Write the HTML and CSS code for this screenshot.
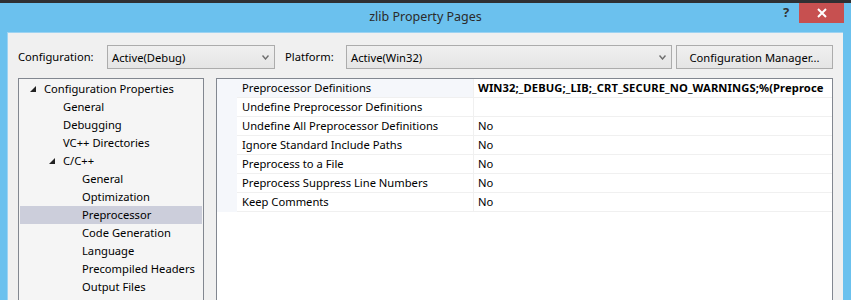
FILE: index.html
```html
<!DOCTYPE html>
<html lang="en">
<head>
    <meta charset="UTF-8">
    <title>zlib Property Pages</title>
    <link rel="stylesheet" href="styles.css">
</head>
<body>
    <div class="frame-top"></div>
    <div class="titlebar">
        <div></div>
        <div class="title">zlib Property Pages</div>
        <div class="caption-buttons">
            <div class="help-button">?</div>
            <div class="close-button">
                <svg width="10" height="10" viewBox="0 0 10 10"><path d="M1 1 L9 9 M9 1 L1 9" stroke="#fff" stroke-width="2"/></svg>
            </div>
        </div>
    </div>

    <div class="dialog">
        <div class="toolbar">
            <label class="toolbar-label config-label">Configuration:</label>
            <div class="combo config-combo">
                <span>Active(Debug)</span>
                <svg class="chevron" width="7" height="5" viewBox="0 0 7 5"><path d="M0.5 0.5 L3.5 4 L6.5 0.5" fill="none" stroke="#6d6d6d" stroke-width="1.4"/></svg>
            </div>
            <label class="toolbar-label platform-label">Platform:</label>
            <div class="combo platform-combo">
                <span>Active(Win32)</span>
                <svg class="chevron" width="7" height="5" viewBox="0 0 7 5"><path d="M0.5 0.5 L3.5 4 L6.5 0.5" fill="none" stroke="#6d6d6d" stroke-width="1.4"/></svg>
            </div>
            <button class="manager-button">Configuration Manager...</button>
        </div>

        <div class="panels">
            <div class="tree">
                <div class="tree-item level-0">
                    <svg class="expander" width="6" height="6" viewBox="0 0 6 6"><polygon points="6,0 6,6 0,6" fill="#222"/></svg>
                    Configuration Properties
                </div>
                <div class="tree-item level-1">General</div>
                <div class="tree-item level-1">Debugging</div>
                <div class="tree-item level-1">VC++ Directories</div>
                <div class="tree-item level-1">
                    <svg class="expander" width="6" height="6" viewBox="0 0 6 6"><polygon points="6,0 6,6 0,6" fill="#222"/></svg>
                    C/C++
                </div>
                <div class="tree-item level-2">General</div>
                <div class="tree-item level-2">Optimization</div>
                <div class="tree-item level-2 selected">Preprocessor</div>
                <div class="tree-item level-2">Code Generation</div>
                <div class="tree-item level-2">Language</div>
                <div class="tree-item level-2">Precompiled Headers</div>
                <div class="tree-item level-2">Output Files</div>
            </div>

            <div class="grid">
                <div class="grid-row focused">
                    <div class="grid-margin"></div>
                    <div class="grid-name">Preprocessor Definitions</div>
                    <div class="grid-value bold">WIN32;_DEBUG;_LIB;_CRT_SECURE_NO_WARNINGS;%(Preproce</div>
                </div>
                <div class="grid-row">
                    <div class="grid-margin"></div>
                    <div class="grid-name">Undefine Preprocessor Definitions</div>
                    <div class="grid-value"></div>
                </div>
                <div class="grid-row">
                    <div class="grid-margin"></div>
                    <div class="grid-name">Undefine All Preprocessor Definitions</div>
                    <div class="grid-value">No</div>
                </div>
                <div class="grid-row">
                    <div class="grid-margin"></div>
                    <div class="grid-name">Ignore Standard Include Paths</div>
                    <div class="grid-value">No</div>
                </div>
                <div class="grid-row">
                    <div class="grid-margin"></div>
                    <div class="grid-name">Preprocess to a File</div>
                    <div class="grid-value">No</div>
                </div>
                <div class="grid-row">
                    <div class="grid-margin"></div>
                    <div class="grid-name">Preprocess Suppress Line Numbers</div>
                    <div class="grid-value">No</div>
                </div>
                <div class="grid-row">
                    <div class="grid-margin"></div>
                    <div class="grid-name">Keep Comments</div>
                    <div class="grid-value">No</div>
                </div>
            </div>
        </div>
    </div>
</body>
</html>
```

FILE: styles.css
```css
* {
    margin: 0;
    padding: 0;
    box-sizing: border-box;
}

body {
    font-family: 'Segoe UI', 'Noto Sans', sans-serif;
    font-size: 11.2px;
    color: #000;
    background: #6bc1ee;
    width: 851px;
    height: 300px;
    overflow: hidden;
}

.frame-top {
    height: 3px;
    background: #2f3033;
}

/* Title bar */
.titlebar {
    display: grid;
    grid-template-columns: 1fr auto 1fr;
    height: 29px;
}

.title {
    font-size: 12.5px;
    color: #2b2b2b;
    line-height: 28px;
}

.caption-buttons {
    display: flex;
    justify-content: flex-end;
    align-items: flex-start;
    padding-right: 7px;
}

.help-button {
    width: 26px;
    height: 20px;
    font-weight: bold;
    font-size: 13px;
    color: #333;
    text-align: center;
    line-height: 19px;
}

.close-button {
    width: 45px;
    height: 20px;
    background: #c75050;
    display: flex;
    align-items: center;
    justify-content: center;
}

/* Dialog body */
.dialog {
    margin: 0 8px 0 7px;
    height: 268px;
    overflow: hidden;
    background: #f0f0f0;
    border-top: 1px solid #9dd3f2;
    border-left: 1px solid #9dd3f2;
    padding: 12px 10px 0 10px;
}

.toolbar {
    display: flex;
    align-items: center;
    height: 24px;
}

.toolbar-label {
    line-height: 24px;
}

.config-label {
    width: 89px;
}

.platform-label {
    width: 61px;
    margin-left: 10px;
}

.combo {
    height: 24px;
    border: 1px solid #acacac;
    background: linear-gradient(#f0f0f0, #e5e5e5);
    display: flex;
    align-items: center;
    justify-content: space-between;
    padding: 0 5px 0 4px;
}

.config-combo {
    width: 168px;
}

.platform-combo {
    flex: 1;
}

.chevron {
    margin-top: 1px;
}

.manager-button {
    width: 157px;
    height: 24px;
    margin-left: 4px;
    border: 1px solid #acacac;
    background: linear-gradient(#f0f0f0, #e5e5e5);
    font-family: inherit;
    font-size: 11.2px;
    color: #000;
}

.panels {
    display: flex;
    gap: 12px;
    margin-top: 9px;
}

/* Tree view */
.tree {
    width: 186px;
    height: 240px;
    border: 1px solid #828790;
    background: #f5f5f5;
    padding: 1px;
}

.tree-item {
    position: relative;
    height: 18px;
    line-height: 18px;
    white-space: nowrap;
}

.tree-item.level-0 { padding-left: 24px; }
.tree-item.level-1 { padding-left: 43px; }
.tree-item.level-2 { padding-left: 62px; }

.tree-item.selected {
    background: #cccedb;
}

.expander {
    position: absolute;
    top: 6px;
}

.level-0 .expander { left: 10px; }
.level-1 .expander { left: 29px; }

/* Property grid */
.grid {
    flex: 1;
    min-width: 0;
    height: 240px;
    border: 1px solid #828790;
    background: #fff;
}

.grid-row {
    display: flex;
    height: 19px;
    line-height: 18px;
}

.grid-margin {
    width: 20px;
    background: #f5f7fb;
}

.grid-name {
    width: 237px;
    padding-left: 5px;
    border-bottom: 1px solid #f0f0f0;
    border-right: 1px solid #f0f0f0;
    white-space: nowrap;
}

.grid-row.focused .grid-name {
    background: #f5f7fb;
}

.grid-value {
    flex: 1;
    min-width: 0;
    padding-left: 4px;
    border-bottom: 1px solid #f0f0f0;
    white-space: nowrap;
    overflow: hidden;
}

.grid-value.bold {
    font-weight: bold;
    letter-spacing: 0.1px;
}
```
